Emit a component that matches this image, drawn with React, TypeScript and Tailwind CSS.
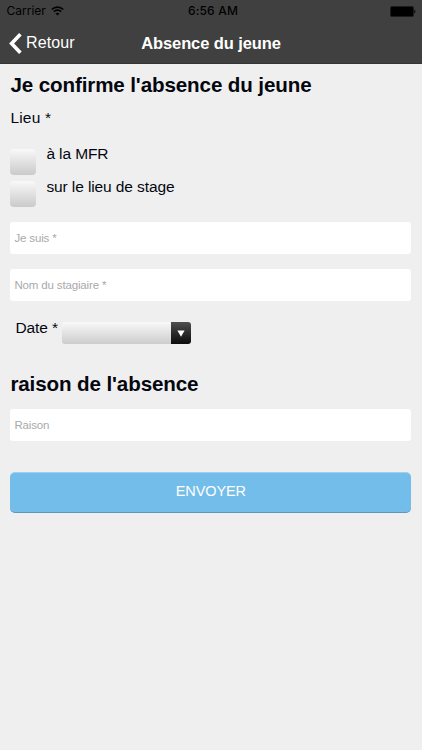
import React from "react";

function StatusBar() {
  return (
    <div className="relative flex h-[22px] items-center justify-between pl-[6.5px] pr-[6px] text-black">
      <div className="flex items-center gap-[5px]">
        <span className="font-[Inter,sans-serif] text-[12px] leading-[22px]">Carrier</span>
        <svg width="13" height="10" viewBox="0 0 13 10" fill="none" stroke="currentColor" strokeWidth="1.7">
          <path d="M0.8 3.5a8.1 8.1 0 0 1 11.4 0" />
          <path d="M2.9 5.7a5.1 5.1 0 0 1 7.2 0" />
          <path d="M6.5 9.6 4.5 7.6a2.9 2.9 0 0 1 4 0z" fill="currentColor" stroke="none" />
        </svg>
      </div>
      <span className="absolute inset-x-0 pl-[4px] text-center font-[Inter,sans-serif] text-[12px] font-medium leading-[22px] tracking-[0.2px]">
        6:56 AM
      </span>
      <svg width="26" height="11" viewBox="0 0 26 11">
        <rect x="0.5" y="0.5" width="23" height="10" rx="1.5" fill="#000" stroke="#1c1c1c" />
        <path d="M24.4 3.7c1.4.3 1.4 3.3 0 3.6z" fill="#000" />
      </svg>
    </div>
  );
}

function Header() {
  return (
    <header className="h-16 border-b border-[#353535] bg-[#404040]">
      <StatusBar />
      <div className="relative flex h-[42px] items-center pl-[9px] text-white">
        <button className="relative z-10 flex items-center gap-[4px]">
          <svg width="13" height="21" viewBox="0 0 13 21" fill="none" stroke="#fff" strokeWidth="3.6">
            <path d="M11.4 1.2 2.6 10.5l8.8 9.3" />
          </svg>
          <span className="text-[16px] leading-[20px] tracking-[0.1px]">Retour</span>
        </button>
        <h1 className="absolute inset-x-0 top-[11px] text-center text-[16.5px] font-bold leading-[20px] tracking-[-0.1px]">
          Absence du jeune
        </h1>
      </div>
    </header>
  );
}

function Choice({ label }: { label: string }) {
  return (
    <label className="flex h-[32.5px] gap-[10px]">
      <span className="mt-[5.9px] h-[26px] w-[26px] rounded-[4px] bg-linear-to-b from-[#f9f9f9] to-[#cacaca]" />
      <span className="mt-[1px] text-[15.5px] leading-[20px] tracking-[-0.1px]">{label}</span>
    </label>
  );
}

function Field({ placeholder }: { placeholder: string }) {
  return (
    <input
      placeholder={placeholder}
      className="block h-[32px] w-full rounded-[3px] bg-white px-[4px] text-[11.5px] tracking-[-0.15px] placeholder:text-[#a9a9a9]"
    />
  );
}

export default function App() {
  return (
    <div className="h-[750px] w-[422px] overflow-hidden bg-[#efefef] font-['Liberation_Sans',Arial,sans-serif] text-[#05070f]">
      <Header />
      <main className="pl-[10.4px] pr-[10.6px]">
        <h2 className="pt-[9px] text-[20.6px] font-bold leading-[24px] tracking-[-0.12px]">Je confirme l'absence du jeune</h2>
        <p className="mt-[11px] text-[15.5px] leading-[20px] tracking-[0.2px]">Lieu *</p>
        <div className="mt-[15px]">
          <Choice label="à la MFR" />
          <Choice label="sur le lieu de stage" />
        </div>
        <div className="mt-[14px] flex flex-col gap-[15px]">
          <Field placeholder="Je suis *" />
          <Field placeholder="Nom du stagiaire *" />
        </div>
        <div className="mt-[17px] flex h-[28px] pl-[5px]">
          <span className="w-[46.4px] text-[15.5px] leading-[20px] tracking-[-0.1px]">Date *</span>
          <div className="mt-[4px] flex h-[22px] w-[129px] overflow-hidden rounded-[3px]">
            <div className="flex-1 bg-linear-to-b from-[#f9f9f9] to-[#cccccc]" />
            <div className="flex w-[20px] items-center justify-center bg-linear-to-b from-[#505050] to-[#0c0c0c]">
              <svg width="8" height="7" viewBox="0 0 8 7">
                <path d="M0.4 0.4h7.2L4 6.8z" fill="#fff" />
              </svg>
            </div>
          </div>
        </div>
        <h2 className="mt-[26px] text-[20.6px] font-bold leading-[24px] tracking-[-0.12px]">raison de l'absence</h2>
        <div className="mt-[13px]">
          <Field placeholder="Raison" />
        </div>
        <button className="mt-[31px] block h-[41px] w-full rounded-[5px] border-b-[1.5px] border-t border-b-[#5c98bd] border-t-[#9fd0ec] bg-[#72bdea] pb-[2px] text-[14.5px] tracking-[-0.1px] text-white">
          ENVOYER
        </button>
      </main>
    </div>
  );
}
